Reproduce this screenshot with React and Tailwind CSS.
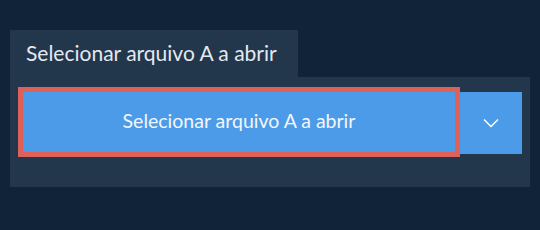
export default function App() {
  return (
    <div
      className="h-[230px] w-[540px] bg-[#112339] px-[10px] pt-[30px]"
      style={{ fontFamily: 'Lato, "Noto Sans", sans-serif' }}
    >
      <div className="flex h-[47px] w-[288px] items-center bg-[#22364c] pl-[16px] pb-[2px] text-[21px] text-[#e4e9ef]">
        Selecionar arquivo A a abrir
      </div>
      <div className="flex h-[110px] w-[520px] items-start bg-[#22364c] px-[8px] pt-[10px]">
        <button
          type="button"
          className="flex h-[70px] w-[442px] items-center justify-center border-[5px] border-[#de605b] bg-[#4c9be8] pb-[2px] text-[19.5px] text-[#f2f6fb]"
        >
          Selecionar arquivo A a abrir
        </button>
        <button
          type="button"
          aria-label="Mais opções"
          className="mt-[5px] flex h-[62px] w-[62px] items-center justify-center bg-[#4c9be8] text-white"
        >
          <svg width="16" height="10" viewBox="0 0 16 10" fill="none" stroke="currentColor" strokeWidth="1.5">
            <path d="M1 1.5l7 7 7-7" />
          </svg>
        </button>
      </div>
    </div>
  );
}
